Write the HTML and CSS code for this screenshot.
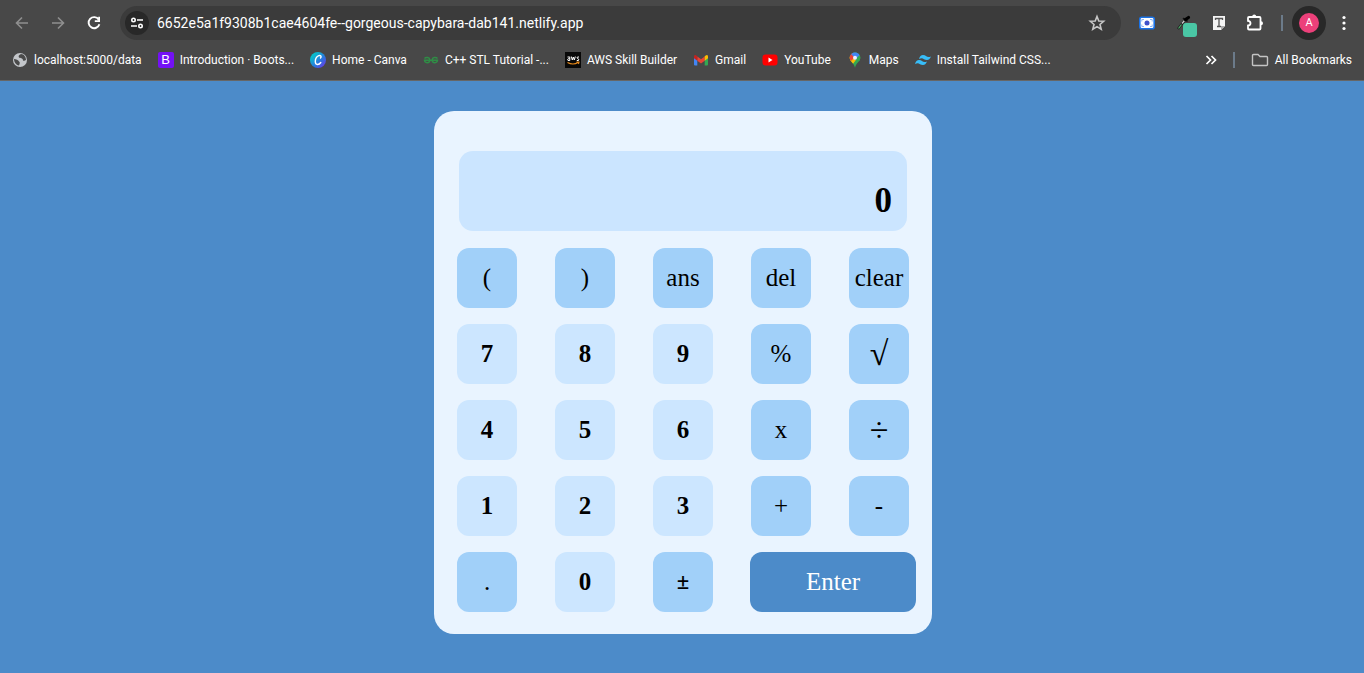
FILE: index.html
```html
<!DOCTYPE html>
<html lang="en">
<head>
<meta charset="utf-8">
<title>Calculator</title>
<link rel="stylesheet" href="styles.css">
</head>
<body>
<header class="browser">
  <div class="toolbar">
    <button class="tool dim" aria-label="Back"><svg width="16" height="16" viewBox="0 0 16 16"><path d="M14 8H3M8 2.500L2.500 8L8 13.500" fill="none" stroke="currentColor" stroke-width="1.600"/></svg></button>
    <button class="tool dim" aria-label="Forward"><svg width="16" height="16" viewBox="0 0 16 16"><path d="M2 8H13M8 2.500L13.500 8L8 13.500" fill="none" stroke="currentColor" stroke-width="1.600"/></svg></button>
    <button class="tool" aria-label="Reload"><svg width="16" height="16" viewBox="0 0 16 16"><path d="M12.700 4.600A5.500 5.500 0 1 0 13.400 9.200" fill="none" stroke="currentColor" stroke-width="1.900"/><path d="M14 1.800V7H8.800V5.300H12.200V1.800Z" fill="currentColor"/></svg></button>
    <div class="address">
      <button class="site-info" aria-label="Site information"><svg width="14" height="14" viewBox="0 0 14 14" fill="none" stroke="currentColor" stroke-width="1.600"><circle cx="3.500" cy="4" r="1.700"/><path d="M7 4H13M1 10H7"/><circle cx="10.500" cy="10" r="1.700"/></svg></button>
      <input class="url" type="text" aria-label="Address" value="6652e5a1f9308b1cae4604fe--gorgeous-capybara-dab141.netlify.app">
      <button class="tool star" aria-label="Bookmark this page"><svg width="18" height="18" viewBox="0 0 18 18"><path d="M9 2.500L10.800 7L15.700 7.300L12 10.500L13.200 15.200L9 12.600L4.800 15.200L6 10.500L2.300 7.300L7.200 7Z" fill="none" stroke="currentColor" stroke-width="1.600"/></svg></button>
    </div>
    <div class="extensions">
      <button class="tool" aria-label="Screen recorder"><svg width="16" height="14" viewBox="0 0 16 14"><rect x=".8" y="1.300" width="14.400" height="11.400" rx="2" fill="#fff" stroke="#1a73e8" stroke-width="1.600"/><path d="M2.800 5.500V3.500H5M11 3.500H13.200V5.500M13.200 8.500V10.500H11M5 10.500H2.800V8.500" fill="none" stroke="#8ab4f8"/><circle cx="8" cy="7" r="2.500" fill="#3f51c9"/></svg></button>
      <button class="tool" aria-label="Color picker"><svg width="28" height="28" viewBox="0 0 28 28"><path d="M9 20L16 11" stroke="#1c1c1c" stroke-width="2.400"/><path d="M9.500 19.500L12.500 15.500" stroke="#4fae6c" stroke-width="1.200"/><path d="M13 14.500L15.500 11.500" stroke="#ccc" stroke-width="1.200"/><path d="M14.500 9.500L18 12" stroke="#111" stroke-width="1.600" stroke-linecap="round"/><path d="M16.500 10.500L19.500 8.500" stroke="#000" stroke-width="3.200" stroke-linecap="round"/><rect x="14" y="14" width="14" height="14" rx="3" fill="#4ac7a5"/></svg></button>
      <button class="tool" aria-label="Text reader"><svg width="14" height="16" viewBox="0 0 14 16"><path d="M1 1H13V11L9 15H1Z" fill="#f4f4f4"/><path d="M9 15V11H13Z" fill="#aaa"/><path d="M3.500 5V3.500H10.500V5M7 3.500V11.500M5 11.500H9" fill="none" stroke="#555" stroke-width="1.300"/></svg></button>
      <button class="tool" aria-label="Extensions"><svg width="20" height="20" viewBox="0 0 20 20"><path d="M4 4H14.500Q15.500 4 15.500 5V15.500Q15.500 16.500 14.500 16.500H4Q3 16.500 3 15.500V12.500Q5.500 12.300 5.500 10.200Q5.500 8 3 7.800V5Q3 4 4 4Z" fill="none" stroke="currentColor" stroke-width="1.800"/><path d="M7.200 3.500A2 2 0 0 1 11.200 3.500ZM16 8.300A2 2 0 0 1 16 12.300Z" fill="currentColor"/></svg></button>
    </div>
    <span class="divider"></span>
    <button class="profile" aria-label="Profile"><span class="avatar">A</span></button>
    <button class="tool" aria-label="Menu"><svg width="4" height="16" viewBox="0 0 4 16" fill="currentColor"><circle cx="2" cy="2.500" r="1.600"/><circle cx="2" cy="8" r="1.600"/><circle cx="2" cy="13.500" r="1.600"/></svg></button>
  </div>
  <nav class="bookmarks" aria-label="Bookmarks">
    <a class="bookmark" href="#"><svg width="16" height="16" viewBox="0 0 16 16"><circle cx="8" cy="8" r="7" fill="#c3c6ca"/><path d="M9 2C7 3 6 4 7 5.500C8 6.500 11 5.500 11 8.500C12 9.500 13 8 14 8C14 5 12 2 9 2ZM2 7C4 7 6.500 8 7 9.500C8 10 8 11 7 13.500C4 13 2 10 2 7Z" fill="#4a4a4a"/></svg>localhost:5000/data</a>
    <a class="bookmark" href="#"><span class="bootstrap">B</span>Introduction · Boots...</a>
    <a class="bookmark" href="#"><svg width="16" height="16" viewBox="0 0 16 16"><defs><linearGradient id="canva" x1="0" y1="0" x2="1" y2="1"><stop offset=".2" stop-color="#08bfcc"/><stop offset=".6" stop-color="#2b75df"/><stop offset="1" stop-color="#7b2ae8"/></linearGradient></defs><circle cx="8" cy="8" r="8" fill="url(#canva)"/><path d="M10.500 6C12 4.500 10.500 3 8.800 3.700C6.500 4.700 5.300 7.500 5.300 9.500C5.300 13.500 9 13 10.800 10.500" fill="none" stroke="#fff" stroke-width="1.400" stroke-linecap="round"/></svg>Home - Canva</a>
    <a class="bookmark" href="#"><svg width="16" height="16" viewBox="0 0 16 16" fill="none" stroke="#2f8d46" stroke-width="1.500"><path d="M1.500 6.500C3 4.800 6.800 5.200 6.800 8C6.800 11.500 1.800 11.500 1.500 8.300H14.500C14.200 11.500 9.200 11.500 9.200 8C9.200 5.200 13 4.800 14.500 6.500"/></svg>C++ STL Tutorial -...</a>
    <a class="bookmark" href="#"><svg width="16" height="16" viewBox="0 0 16 16"><rect width="16" height="16" fill="#080808"/><path d="M2.500 5H4.800V8.500H3Q2 7.500 3 6.800H4.800M6.300 4.500L7.300 8L8.300 5L9.300 8L10.300 4.500M14 5H12.500Q11.500 6 12.500 6.500Q14.500 7 13.500 8.500H11.800" fill="none" stroke="#fff" stroke-width="1"/><path d="M2.500 10.500Q8 13.500 13 10.500M11.500 10H14L13.500 12" fill="none" stroke="#e88a1a" stroke-width="1.100"/></svg>AWS Skill Builder</a>
    <a class="bookmark" href="#"><svg width="16" height="16" viewBox="0 0 16 16"><path d="M1 5V12.500Q1 13.500 2 13.500H4.300V7Z" fill="#4285f4"/><path d="M15 5V12.500Q15 13.500 14 13.500H11.700V7Z" fill="#34a853"/><path d="M4.300 4.500L8 7.300L11.700 4.500V8.700L8 11.500L4.300 8.700Z" fill="#ea4335"/><path d="M1 4.500Q1 1.500 4.300 4.200V8.700L1 6.200Z" fill="#c5221f"/><path d="M15 4.500Q15 1.500 11.700 4.200V8.700L15 6.200Z" fill="#fbbc04"/></svg>Gmail</a>
    <a class="bookmark" href="#"><svg width="16" height="16" viewBox="0 0 16 16"><rect x=".5" y="2.500" width="15" height="11" rx="3" fill="#f00"/><path d="M6.500 5.500V10.500L10.500 8Z" fill="#fff"/></svg>YouTube</a>
    <a class="bookmark" href="#"><svg width="16" height="16" viewBox="0 0 16 16"><defs><clipPath id="pin"><path d="M8 .5C4.800 .5 2.700 3 2.700 5.800C2.700 9.500 6.800 10.800 8 15.700C9.200 10.800 13.300 9.500 13.300 5.800C13.300 3 11.200 .5 8 .5Z"/></clipPath></defs><g clip-path="url(#pin)"><path d="M0 0H16V16H0Z" fill="#34a853"/><path d="M0 5H8L9 8L5 13H0Z" fill="#fbbc04"/><path d="M0 0H5L8 5L4 9L0 6Z" fill="#ea4335"/><path d="M4 2L6 0H16L8 8L7 5Z" fill="#4285f4"/><path d="M13 3L16 4V10L8 8Z" fill="#34a853"/></g><circle cx="8" cy="5.700" r="2" fill="#e8efff"/></svg>Maps</a>
    <a class="bookmark" href="#"><svg width="16" height="16" viewBox="0 0 16 16" fill="#38bdf8"><path d="M4 7Q5 3 8 3C11.500 3 11.500 6.200 16 4.500Q14.500 8 12 8C8.500 8 8 4.700 4 7ZM0 12Q1 8 4 8C7.500 8 7.500 11.200 12 9.500Q10.500 13 8 13C4.500 13 4 9.700 0 12Z"/></svg>Install Tailwind CSS...</a>
    <div class="overflow">
      <button class="tool" aria-label="More bookmarks"><svg width="12" height="10" viewBox="0 0 12 10" fill="none" stroke="currentColor" stroke-width="1.700"><path d="M1.500 1L5.500 5L1.500 9M6.500 1L10.500 5L6.500 9"/></svg></button>
      <span class="divider"></span>
      <a class="bookmark" href="#"><svg width="18" height="16" viewBox="0 0 18 16"><path d="M1.500 3.500Q1.500 2.500 2.500 2.500H7L9 4.500H15.500Q16.500 4.500 16.500 5.500V12.500Q16.500 13.500 15.500 13.500H2.500Q1.500 13.500 1.500 12.500Z" fill="none" stroke="#c4c4c4" stroke-width="1.400"/></svg>All Bookmarks</a>
    </div>
  </nav>
</header>
<main class="page">
  <section class="calculator" aria-label="Calculator">
    <output class="display">0</output>
    <div class="keys">
      <button class="key">(</button><button class="key">)</button><button class="key">ans</button><button class="key">del</button><button class="key">clear</button>
      <button class="key digit">7</button><button class="key digit">8</button><button class="key digit">9</button><button class="key">%</button><button class="key math">√</button>
      <button class="key digit">4</button><button class="key digit">5</button><button class="key digit">6</button><button class="key">x</button><button class="key math">÷</button>
      <button class="key digit">1</button><button class="key digit">2</button><button class="key digit">3</button><button class="key">+</button><button class="key">-</button>
      <button class="key">.</button><button class="key digit">0</button><button class="key sign">±</button><button class="key enter">Enter</button>
    </div>
  </section>
</main>
</body>
</html>
```
FILE: styles.css
```css
* { box-sizing: border-box; }

body {
  margin: 0;
  min-height: 100vh;
  display: flex;
  flex-direction: column;
  background: #4c8bc9;
  font-family: "Liberation Serif", serif;
}

button {
  border: 0;
  padding: 0;
  background: none;
  color: inherit;
  font: inherit;
  cursor: pointer;
}

svg { display: block; flex: none; }

.browser {
  background: #484848;
  border-bottom: 1px solid #666;
  color: #fff;
  font: 12px/16px Roboto, "Noto Sans", sans-serif;
}

.toolbar {
  display: flex;
  align-items: center;
  height: 46px;
  padding: 0 2px 0 4px;
}

.tool {
  display: flex;
  flex: none;
  align-items: center;
  justify-content: center;
  width: 36px;
  height: 28px;
}

.dim { color: #8f8f8f; }

.address {
  display: flex;
  flex: 1;
  align-items: center;
  height: 34px;
  margin: 0 8px;
  padding: 0 6px 0 5px;
  border-radius: 17px;
  background: #3b3b3b;
}

.site-info {
  display: flex;
  align-items: center;
  justify-content: center;
  width: 24px;
  height: 24px;
  border-radius: 50%;
  background: #282828;
}

.url {
  flex: 1;
  min-width: 0;
  margin-left: 8px;
  padding: 0;
  border: 0;
  outline: 0;
  background: none;
  color: #fff;
  font: 14px/20px Roboto, "Noto Sans", sans-serif;
}

.star { color: #c7c7c7; }

.extensions { display: flex; }

.divider {
  width: 2px;
  height: 16px;
  margin: 0 9px 0 8px;
  background: #6c7b8a;
}

.profile {
  display: flex;
  align-items: center;
  justify-content: center;
  width: 34px;
  height: 34px;
  border-radius: 50%;
  background: #282828;
}

.avatar {
  width: 20px;
  height: 20px;
  border-radius: 50%;
  background: #ec407a;
  font: 11px/20px Roboto, sans-serif;
  text-align: center;
}

.bookmarks {
  display: flex;
  align-items: center;
  gap: 16px;
  height: 34px;
  padding: 0 12px 6px;
}

.bookmark {
  display: flex;
  align-items: center;
  gap: 6px;
  color: inherit;
  text-decoration: none;
  white-space: nowrap;
}

.bootstrap {
  width: 16px;
  height: 16px;
  border-radius: 2px;
  background: #7411f5;
  font: 13px/16px "Liberation Sans", sans-serif;
  text-align: center;
}

.overflow {
  display: flex;
  align-items: center;
  margin-left: auto;
}

.overflow .divider { margin: 0 16px 0 4px; }

.page { padding: 30px 0 39px 2px; }

.calculator {
  width: 100%;
  max-width: 498px;
  margin: 0 auto;
  padding: 40px 4px 22px;
  border-radius: 20px;
  background: #e9f4ff;
}

.display {
  display: block;
  height: 80px;
  margin: 0 21px 17px;
  padding: 28px 15px 0;
  border-radius: 14px;
  background: #cbe5ff;
  color: #000;
  font-size: 35px;
  font-weight: bold;
  line-height: 44px;
  text-align: right;
}

.keys {
  display: grid;
  grid-template-columns: repeat(5, 1fr);
  row-gap: 16px;
  justify-items: center;
}

.key {
  width: 60px;
  height: 60px;
  border-radius: 12px;
  background: #a1d0f9;
  color: #000;
  font-size: 25px;
  line-height: 30px;
}

.digit {
  background: #cce6ff;
  font-weight: bold;
}

.math { font-size: 34px; }

.sign {
  padding-bottom: 4px;
  font: 500 22px/30px "Noto Sans", sans-serif;
}

.enter {
  grid-column: span 2;
  justify-self: start;
  width: 166px;
  margin-left: 18px;
  background: #4c8bc9;
  color: #fff;
}
```
